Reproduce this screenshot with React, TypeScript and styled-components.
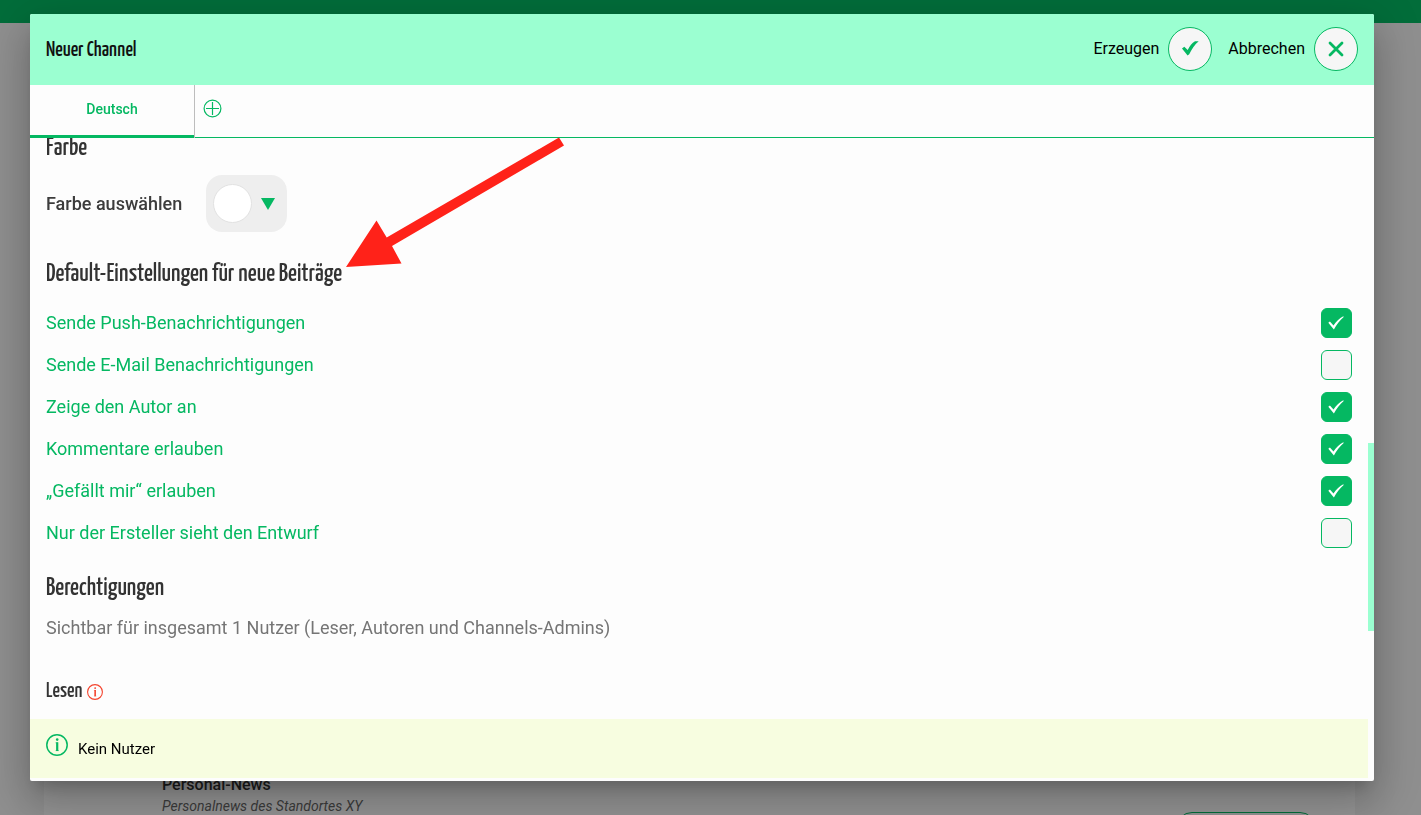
import React, { useId, useState } from "react";
import styled, { createGlobalStyle } from "styled-components";

const green = "#05b862";
const mint = "#9bffd1";

const GlobalStyle = createGlobalStyle`
  *, *::before, *::after { box-sizing: border-box; }
  body { margin: 0; background: #8f8f8f; color: #000; font-family: Roboto, "Liberation Sans", sans-serif; }
  h1, h2, h3, p { margin: 0; }
  button { font: inherit; cursor: pointer; }
`;

const headingFont = `"Yanone Kaffeesatz", "Liberation Sans Narrow", "Roboto Condensed", "DejaVu Sans Condensed", sans-serif`;

const Page = styled.div`
  height: 100vh;
  display: flex;
  flex-direction: column;
  overflow: hidden;
`;

const TopBar = styled.div`
  flex: none;
  height: 23px;
  background: #026d3a;
`;

const ChannelList = styled.main`
  flex: 1;
  min-height: 0;
  margin: 0 66px 0 44px;
  display: flex;
  flex-direction: column;
  justify-content: flex-end;
  background: #959595;
`;

const ChannelRow = styled.div`
  display: flex;
  justify-content: space-between;
  height: 40px;
  padding: 0 39px 0 118px;
  overflow: hidden;
`;

const ChannelName = styled.h3`
  font-size: 16px;
  line-height: 20px;
  font-weight: 500;
  color: #1c1c1c;
`;

const ChannelText = styled.p`
  font-size: 14px;
  line-height: 22px;
  font-style: italic;
  color: #3c3c3c;
`;

const FollowButton = styled.button`
  width: 140px;
  height: 36px;
  margin-top: 37px;
  border: 1px solid #026d3a;
  border-radius: 16px;
  background: transparent;
`;

const Dialog = styled.section`
  position: fixed;
  inset: 14px 47px 34px 30px;
  display: flex;
  flex-direction: column;
  overflow: hidden;
  border-radius: 2px;
  background: #fdfdfd;
`;

const Shadow = styled.div`
  position: fixed;
  inset: 14px 47px 34px 30px;
  border-radius: 2px;
  box-shadow: 0 11px 15px -7px rgba(0, 0, 0, 0.2), 0 24px 38px 3px rgba(0, 0, 0, 0.14),
    0 9px 46px 8px rgba(0, 0, 0, 0.12);
`;

const DialogHeader = styled.header`
  flex: none;
  display: flex;
  align-items: center;
  gap: 16px;
  height: 71px;
  padding: 0 16px 2px;
  background: ${mint};
`;

const DialogTitle = styled.h1`
  flex: 1;
  padding-top: 4px;
  font: 500 21px/24px ${headingFont};
  color: #111;
`;

const ActionButton = styled.button`
  display: flex;
  align-items: center;
  gap: 9px;
  padding: 0;
  border: 0;
  background: none;
  color: #000;
  font-size: 16px;
  line-height: 24px;
`;

const RoundIcon = styled.span`
  display: grid;
  place-items: center;
  width: 44px;
  height: 44px;
  border: 1px solid ${green};
  border-radius: 50%;
  background: #f6f6f6;
`;

const Tabs = styled.nav`
  flex: none;
  display: flex;
  height: 53px;
  border-bottom: 1px solid ${green};
`;

const Tab = styled.button`
  width: 165px;
  height: 53px;
  padding: 0 0 5px;
  border: 0;
  border-right: 1px solid #bdbdbd;
  background: linear-gradient(${green}, ${green}) bottom / 100% 3px no-repeat;
  color: ${green};
  font-size: 14px;
  font-weight: 500;
`;

const AddTab = styled.button`
  display: flex;
  align-items: center;
  padding: 0 8px 6px;
  border: 0;
  background: none;
`;

const Scroller = styled.div`
  flex: 1;
  min-height: 0;
  display: flex;
`;

const Content = styled.div`
  flex: 1;
  min-width: 0;
  overflow: hidden;
`;

const Track = styled.div`
  width: 6px;
  display: grid;
  grid-template-rows: 305fr 188fr 150fr;
`;

const Thumb = styled.div`
  grid-row: 2;
  background: ${mint};
`;

const Section = styled.section`
  padding: 0 16px;
`;

const SectionTitle = styled.h2`
  font: 500 25px/22px ${headingFont};
  color: #333;
`;

const ColorRow = styled.div`
  display: flex;
  align-items: center;
  gap: 24px;
  margin: 15px 0 32px;
  font-size: 18px;
  font-weight: 500;
  color: #3c3c3c;
`;

const ColorButton = styled.button`
  display: flex;
  align-items: center;
  gap: 9px;
  height: 57px;
  padding: 0 12px 0 7px;
  border: 0;
  border-radius: 16px;
  background: #eee;
`;

const Swatch = styled.span`
  width: 39px;
  height: 39px;
  border: 1px solid #e2e2e2;
  border-radius: 50%;
  background: #fff;
`;

const Options = styled.div`
  margin: 16px 0 24px;
`;

const OptionRow = styled.div`
  display: flex;
  align-items: center;
  justify-content: space-between;
  height: 42px;
`;

const OptionLabel = styled.label`
  color: ${green};
  font-size: 18px;
  line-height: 24px;
`;

const CheckCell = styled.span`
  display: grid;
  place-items: center;
  & > * { grid-area: 1 / 1; }
  & > svg { pointer-events: none; }
`;

const CheckInput = styled.input`
  appearance: none;
  width: 31px;
  height: 30px;
  margin: 0;
  border: 1px solid ${green};
  border-radius: 6px;
  background: #f6f6f6;
  &:checked { background: ${green}; }
`;

const Summary = styled.p`
  margin: 16px 0 41px;
  color: #757575;
  font-size: 18px;
  line-height: 24px;
`;

const SubTitle = styled.h3`
  display: flex;
  align-items: center;
  gap: 5px;
  margin-bottom: 16px;
  font: 500 21px/22px ${headingFont};
  color: #333;
`;

const Notice = styled.div`
  display: flex;
  gap: 10px;
  height: 59px;
  padding: 15px 16px;
  background: #f7fde0;
  font-size: 15px;
  line-height: 30px;
`;

const Arrow = styled.svg`
  position: absolute;
  left: 316px;
  top: 123px;
  pointer-events: none;
`;

const InfoIcon = ({ size, color }: { size: number; color: string }) => (
  <svg width={size} height={size} viewBox="0 0 22 22" fill="none" stroke={color} aria-hidden="true">
    <circle cx="11" cy="11" r="10.2" strokeWidth="1.5" />
    <path d="M11.200 8.300V17" strokeWidth="2.2" />
    <path d="M9.500 8.800H12M9.600 16.600H12.800" strokeWidth=".6" />
    <circle cx="11.200" cy="5.600" r="1.300" fill={color} stroke="none" />
  </svg>
);

const PlusCircleIcon = () => (
  <svg width="19" height="19" viewBox="0 0 19 19" fill="none" stroke={green} strokeWidth="1.2" aria-hidden="true">
    <circle cx="9.5" cy="9.5" r="8.4" />
    <path d="M9.5 3v13M3 9.5h13" />
  </svg>
);

type OptionProps = { label: string; initial: boolean };

const Option = ({ label, initial }: OptionProps) => {
  const id = useId();
  const [checked, setChecked] = useState(initial);
  return (
    <OptionRow>
      <OptionLabel htmlFor={id}>{label}</OptionLabel>
      <CheckCell>
        <CheckInput id={id} type="checkbox" checked={checked} onChange={(e) => setChecked(e.target.checked)} />
        {checked && (
          <svg width="17" height="14" viewBox="0 0 17 14" aria-hidden="true">
            <path d="M.3 6.800 1.900 5.500 5.500 9.600C8 5.700 11.300 2.300 15.300.200L15.700.900C11.700 4.300 8.500 8.600 5.900 13.500Z" fill="#fff" />
          </svg>
        )}
      </CheckCell>
    </OptionRow>
  );
};

const options: OptionProps[] = [
  { label: "Sende Push-Benachrichtigungen", initial: true },
  { label: "Sende E-Mail Benachrichtigungen", initial: false },
  { label: "Zeige den Autor an", initial: true },
  { label: "Kommentare erlauben", initial: true },
  { label: "„Gefällt mir“ erlauben", initial: true },
  { label: "Nur der Ersteller sieht den Entwurf", initial: false },
];

export default function App() {
  return (
    <>
      <GlobalStyle />
      <Page>
        <TopBar />
        <ChannelList>
          <ChannelRow>
            <div>
              <ChannelName>Personal-News</ChannelName>
              <ChannelText>Personalnews des Standortes XY</ChannelText>
            </div>
            <FollowButton type="button" aria-label="Abonnieren" />
          </ChannelRow>
        </ChannelList>
      </Page>
      <Shadow />
      <Dialog role="dialog" aria-labelledby="dialog-title">
        <DialogHeader>
          <DialogTitle id="dialog-title">Neuer Channel</DialogTitle>
          <ActionButton type="button">
            Erzeugen
            <RoundIcon>
              <svg width="17" height="15" viewBox="0 0 17 15" aria-hidden="true">
                <path d="M0 7.500 2.300 5.700 5.700 9C7.600 4.800 10 2 13 .2L16.700.200C12.500 3.800 9.600 8.400 7.200 13.200L5.600 14.600Z" fill={green} />
              </svg>
            </RoundIcon>
          </ActionButton>
          <ActionButton type="button">
            Abbrechen
            <RoundIcon>
              <svg width="16" height="16" viewBox="0 0 16 16" aria-hidden="true">
                <path d="M2 2l12 12M14 2L2 14" stroke={green} strokeWidth="2.8" strokeLinecap="round" />
              </svg>
            </RoundIcon>
          </ActionButton>
        </DialogHeader>
        <Tabs>
          <Tab type="button">Deutsch</Tab>
          <AddTab type="button" aria-label="Sprache hinzufügen">
            <PlusCircleIcon />
          </AddTab>
        </Tabs>
        <Scroller>
          <Content>
            <Section>
              <SectionTitle>Farbe</SectionTitle>
              <ColorRow>
                <span id="color-label">Farbe auswählen</span>
                <ColorButton type="button" aria-labelledby="color-label">
                  <Swatch />
                  <svg width="14" height="12" viewBox="0 0 14 12" aria-hidden="true">
                    <path d="M0 0h14L7 12z" fill={green} />
                  </svg>
                </ColorButton>
              </ColorRow>
              <SectionTitle>Default-Einstellungen für neue Beiträge</SectionTitle>
              <Options>
                {options.map((o) => (
                  <Option key={o.label} {...o} />
                ))}
              </Options>
              <SectionTitle>Berechtigungen</SectionTitle>
              <Summary>Sichtbar für insgesamt 1 Nutzer (Leser, Autoren und Channels-Admins)</Summary>
              <SubTitle>
                Lesen
                <InfoIcon size={16} color="#f4442e" />
              </SubTitle>
            </Section>
            <Notice>
              <InfoIcon size={22} color={green} />
              <span>Kein Nutzer</span>
            </Notice>
          </Content>
          <Track>
            <Thumb />
          </Track>
        </Scroller>
        <Arrow width="218" height="131" viewBox="0 0 218 131" aria-hidden="true">
          <path d="M0 130 30.500 83.500 40.700 100.500 213 .5 218 8.500 46 109 55.500 126.500Z" fill="#ff2219" />
        </Arrow>
      </Dialog>
    </>
  );
}
